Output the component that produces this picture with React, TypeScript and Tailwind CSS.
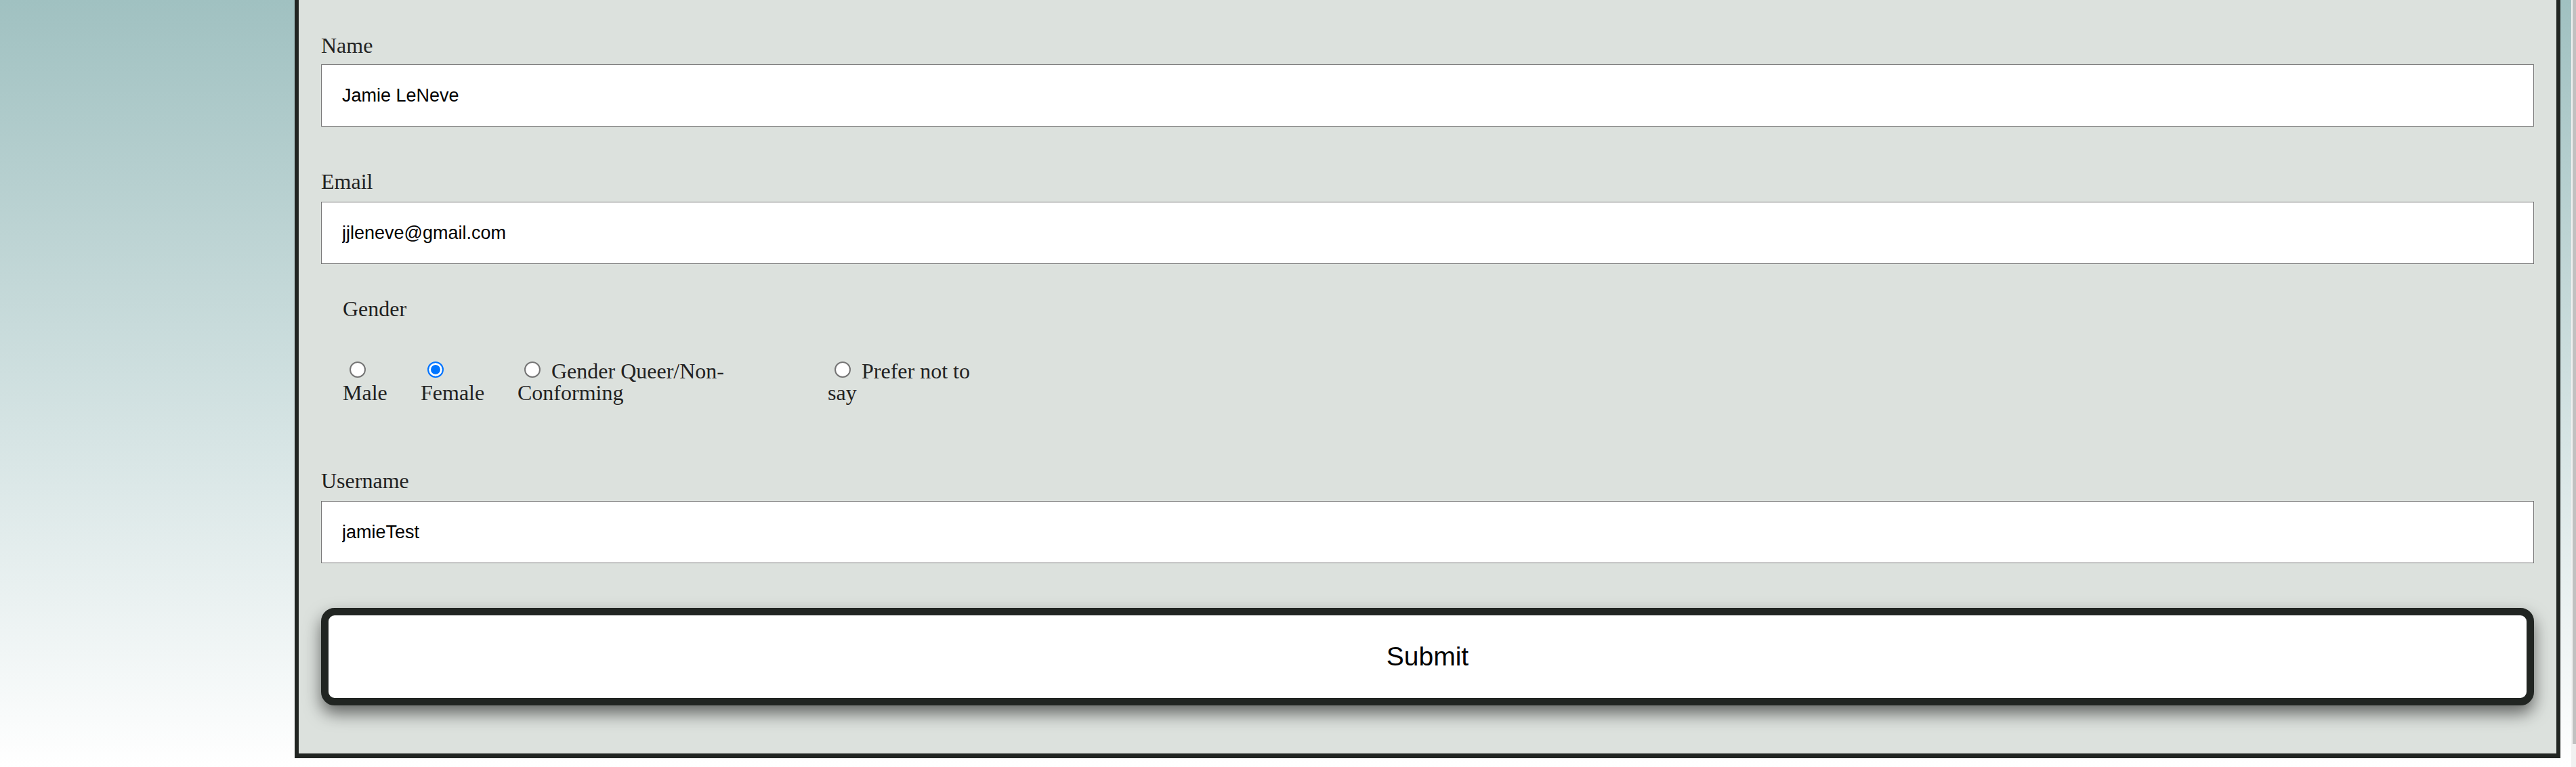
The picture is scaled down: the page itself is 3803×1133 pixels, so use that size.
import React from "react";

type GenderOption = {
  value: string;
  firstLine: string;
  secondLine: string;
  width: string;
};

const genderOptions: GenderOption[] = [
  { value: "male", firstLine: "", secondLine: "Male", width: "w-[115px]" },
  { value: "female", firstLine: "", secondLine: "Female", width: "w-[143px]" },
  { value: "queer", firstLine: "Gender Queer/Non-", secondLine: "Conforming", width: "w-[458px]" },
  { value: "none", firstLine: "Prefer not to", secondLine: "say", width: "w-[230px]" },
];

const labelClass =
  "block h-[36px] font-['Liberation_Serif',serif] text-[32px] leading-[36px] text-[#222]";

const inputClass =
  "block h-[92px] w-full border border-[#767676] bg-white px-[30px] font-['Liberation_Sans',sans-serif] text-[27px] text-black outline-none";

const Field = ({ label, value, className }: { label: string; value: string; className: string }) => (
  <div className={className}>
    <label className={labelClass}>{label}</label>
    <input readOnly defaultValue={value} className={`${inputClass} mt-[12px]`} />
  </div>
);

export default function App() {
  return (
    <div className="flex min-h-screen w-full">
      <div className="flex-1 bg-gradient-to-b from-[#a0c1c1] to-white pb-[13px] pl-[435px] pr-[16px]">
        <form className="border-x-[6px] border-b-[7px] border-[#212522] bg-[#dce1dd] px-[33px] pb-[71px] pt-[49px]">
          <div>
            <label className={labelClass}>Name</label>
            <input readOnly defaultValue="Jamie LeNeve" className={`${inputClass} mt-[10px]`} />
          </div>

          <Field label="Email" value="jjleneve@gmail.com" className="mt-[63px]" />

          <fieldset className="mt-[48px] pl-[32px] font-['Liberation_Serif',serif] text-[32px] text-[#222]">
            <legend className="h-[36px] leading-[36px]">Gender</legend>
            <div className="mt-[58px] flex">
              {genderOptions.map((opt) => (
                <label key={opt.value} className={`${opt.width} block shrink-0 leading-[32px]`}>
                  <div className="flex h-[32px] items-start whitespace-nowrap">
                    <input
                      type="radio"
                      name="gender"
                      value={opt.value}
                      defaultChecked={opt.value === "female"}
                      className="ml-[10px] mr-[16px] mt-[2px] h-[24px] w-[24px] shrink-0 appearance-none rounded-full border-2 border-[#767676] bg-white outline-none checked:border-[#0075ff] checked:bg-[#0075ff] checked:shadow-[inset_0_0_0_3px_#ffffff]"
                    />
                    <span>{opt.firstLine}</span>
                  </div>
                  <div className="h-[32px] whitespace-nowrap">{opt.secondLine}</div>
                </label>
              ))}
            </div>
          </fieldset>

          <Field label="Username" value="jamieTest" className="mt-[96px]" />

          <button
            type="button"
            className="mt-[66px] block h-[144px] w-full rounded-[20px] border-[11px] border-[#212522] bg-white font-['Liberation_Sans',sans-serif] text-[39px] text-black shadow-[0_12px_24px_rgba(0,0,0,0.55)]"
          >
            Submit
          </button>
        </form>
      </div>

      <div className="w-[7px] shrink-0 bg-[#f1f1f1] pl-[2px]">
        <div className="h-[1099px] bg-[#c1c1c1]" />
      </div>
    </div>
  );
}
